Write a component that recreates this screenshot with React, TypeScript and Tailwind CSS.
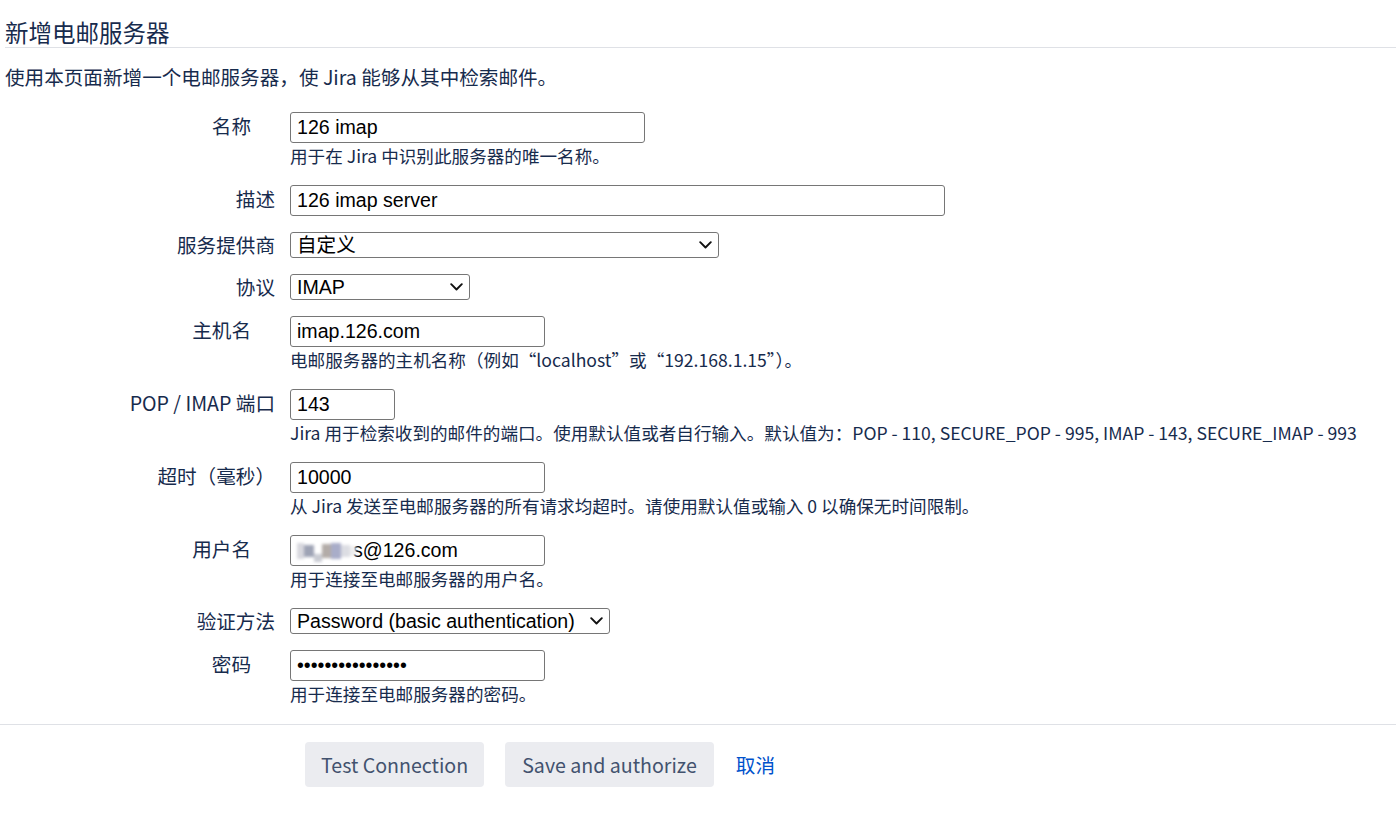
import React from 'react';

type Field = {
  label: string;
  required?: boolean;
  kind: 'input' | 'select' | 'password' | 'user';
  value: string;
  width: string;
  description?: string;
};

const fields: Field[] = [
  { label: '名称', required: true, kind: 'input', value: '126 imap', width: 'w-[355px]', description: '用于在 Jira 中识别此服务器的唯一名称。' },
  { label: '描述', kind: 'input', value: '126 imap server', width: 'w-[655px]' },
  { label: '服务提供商', kind: 'select', value: '自定义', width: 'w-[429px]' },
  { label: '协议', kind: 'select', value: 'IMAP', width: 'w-[180px]' },
  { label: '主机名', required: true, kind: 'input', value: 'imap.126.com', width: 'w-[255px]', description: '电邮服务器的主机名称（例如“localhost”或“192.168.1.15”）。' },
  { label: 'POP / IMAP 端口', kind: 'input', value: '143', width: 'w-[105px]', description: 'Jira 用于检索收到的邮件的端口。使用默认值或者自行输入。默认值为：POP - 110, SECURE_POP - 995, IMAP - 143, SECURE_IMAP - 993' },
  { label: '超时（毫秒）', kind: 'input', value: '10000', width: 'w-[255px]', description: '从 Jira 发送至电邮服务器的所有请求均超时。请使用默认值或输入 0 以确保无时间限制。' },
  { label: '用户名', required: true, kind: 'user', value: 's@126.com', width: 'w-[255px]', description: '用于连接至电邮服务器的用户名。' },
  { label: '验证方法', kind: 'select', value: 'Password (basic authentication)', width: 'w-[320px]' },
  { label: '密码', required: true, kind: 'password', value: 'aaaaaaaaaaaaaaaa', width: 'w-[255px]', description: '用于连接至电邮服务器的密码。' },
];

const inputCls =
  "h-[31px] rounded-[3px] border border-[#767676] bg-white px-[6px] text-[19.6px] text-black outline-none [font-family:'Liberation_Sans',Arial,sans-serif]";

function Chevron() {
  return (
    <svg className="pointer-events-none absolute right-[7px] top-1/2 -translate-y-1/2" width="13" height="8" viewBox="0 0 13 8" fill="none">
      <path d="M1.2 1.2l5.3 5.3 5.3-5.3" stroke="#111" strokeWidth="1.9" strokeLinecap="round" strokeLinejoin="round" />
    </svg>
  );
}

function Control({ f }: { f: Field }) {
  if (f.kind === 'select') {
    return (
      <div className={`relative ${f.width}`}>
        <select
          defaultValue={f.value}
          className="h-[26px] w-full appearance-none rounded-[3px] border border-[#767676] bg-white pl-[6px] pr-[26px] text-[19.6px] leading-[24px] text-black outline-none [font-family:'Liberation_Sans',Arial,'Noto_Sans_CJK_SC',sans-serif]"
        >
          <option value={f.value}>{f.value}</option>
        </select>
        <Chevron />
      </div>
    );
  }
  if (f.kind === 'user') {
    return (
      <div className={`${inputCls} ${f.width} flex items-center overflow-hidden`}>
        <div className="flex h-[22px] items-center blur-[1.5px]">
          <span className="h-[16px] w-[7px] bg-[#d8d8de]" />
          <span className="h-[12px] w-[10px] bg-[#9ea3b5]" />
          <span className="h-[8px] w-[8px] self-end bg-[#c9cbd3]" />
          <span className="h-[14px] w-[9px] bg-[#b3aca8]" />
          <span className="h-[16px] w-[10px] bg-[#a9adc9]" />
          <span className="h-[12px] w-[9px] bg-[#dcdde3]" />
          <span className="h-[10px] w-[6px] bg-[#eeeeef]" />
        </div>
        <span className="-ml-[3px]">{f.value}</span>
      </div>
    );
  }
  return (
    <input
      type={f.kind === 'password' ? 'password' : 'text'}
      defaultValue={f.value}
      className={`${inputCls} ${f.width}`}
    />
  );
}

export default function App() {
  return (
    <div className="min-h-screen bg-white text-[#172b4d] [font-family:'Noto_Sans_CJK_SC','Noto_Sans',sans-serif]">
      <h2 className="ml-[5px] border-b border-[#dfe1e6] pt-[18px] text-[23.5px] font-normal leading-[29px]">
        新增电邮服务器
      </h2>
      <p className="mt-[15px] pl-[5px] text-[19.6px] leading-[28px]">
        使用本页面新增一个电邮服务器，使 Jira 能够从其中检索邮件。
      </p>

      <form className="mt-[21px] flex flex-col gap-[16px]">
        {fields.map((f) => (
          <div key={f.label} className="flex">
            <label
              className={`w-[290px] shrink-0 text-right text-[19.6px] ${f.required ? 'pr-[39px]' : 'pr-[15px]'} ${f.kind === 'select' ? 'h-[26px] leading-[26px]' : 'leading-[28px]'}`}
            >
              {f.label}
            </label>
            <div className="flex flex-col">
              <Control f={f} />
              {f.description && (
                <div className="h-[26px] whitespace-nowrap text-[17.6px] leading-[26px]">{f.description}</div>
              )}
            </div>
          </div>
        ))}
      </form>

      <div className="mt-[17px] border-t border-[#dfe1e6] pt-[17px]">
        <div className="flex items-center pl-[305px]">
          <button type="button" className="h-[45px] rounded-[4px] bg-[#ebecf0] px-[16px] text-[19.6px] text-[#42526e]">
            Test Connection
          </button>
          <button type="button" className="ml-[21px] h-[45px] rounded-[4px] bg-[#ebecf0] px-[17px] text-[19.6px] text-[#42526e]">
            Save and authorize
          </button>
          <a href="#" className="ml-[22px] text-[19.6px] text-[#0052cc]">
            取消
          </a>
        </div>
      </div>
    </div>
  );
}
